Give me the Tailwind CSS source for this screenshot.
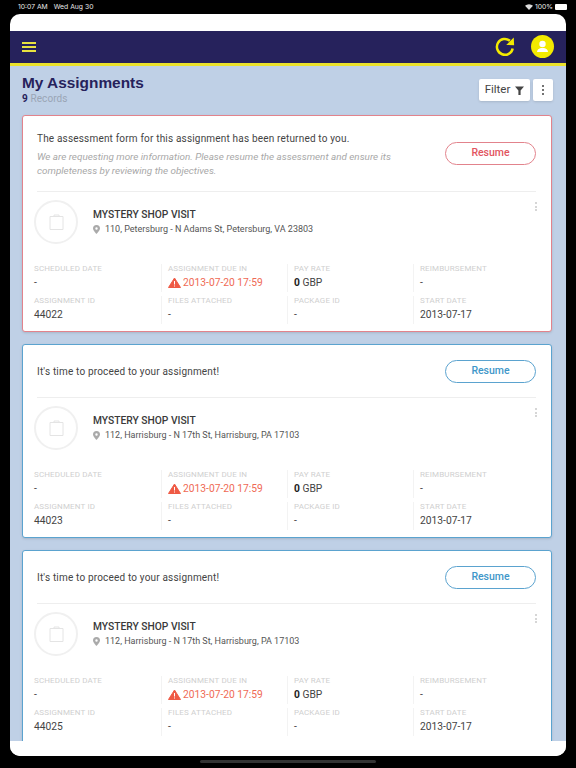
<!DOCTYPE html>
<html><head><meta charset="utf-8">
<script src="https://cdn.jsdelivr.net/npm/@tailwindcss/browser@4"></script>
</head>
<body class="bg-black font-['Roboto',sans-serif]">
<div class="w-[576px] h-[768px] bg-black flex flex-col overflow-hidden relative">
  <div class="h-[14px] flex items-center justify-between pl-[18px] pr-[9px] text-[6.800px] text-[#e8e8e8] font-['Inter',sans-serif]">
    <div class="flex gap-[6px]"><span>10:07 AM</span><span>Wed Aug 30</span></div>
    <div class="flex items-center gap-[2px]">
      <svg width="8" height="6" viewBox="0 0 16 12" fill="#ddd"><path d="M8 12 0 3.5a12 12 0 0 1 16 0z"/></svg>
      <span>100%</span>
      <span class="w-[12px] h-[6px] bg-white rounded-[1px]"></span>
    </div>
  </div>
  <div class="mx-[10px] h-[742px] bg-white rounded-[10px] overflow-hidden flex flex-col">
    <div class="h-[17px] shrink-0"></div>
    <div class="h-[35px] shrink-0 bg-[#26225c] border-b-[3px] border-[#ebe22b] flex items-center justify-between pl-[12px] pr-[12px]">
      <div class="flex flex-col gap-[2px] w-[14px]">
        <span class="h-[2px] bg-[#e8e23f]"></span><span class="h-[2px] bg-[#e8e23f]"></span><span class="h-[2px] bg-[#e8e23f]"></span>
      </div>
      <div class="flex items-center gap-[14px] -mt-[1px]">
        <svg width="23" height="24" viewBox="0 0 24 24" fill="none"><path d="M19.5 13.5A8.3 8.3 0 1 1 16.6 5.4" stroke="#f3ea00" stroke-width="2.6"/><path d="M12.8 9.8 21 10.2 20.6 2z" fill="#f3ea00"/></svg>
        <div class="w-[23px] h-[23px] rounded-full bg-[#f3ea00] flex items-center justify-center">
          <svg width="13" height="13" viewBox="0 0 13 13" fill="#fff"><circle cx="6.5" cy="4" r="3.2"/><path d="M1 12c0-2.500 2-3.500 4-4h3c2 .5 4 1.500 4 4z"/></svg>
        </div>
      </div>
    </div>
    <div class="h-[675px] shrink-0 bg-[#bfd0e6] pl-[12px] pr-[14px] overflow-hidden">
      <div class="h-[49px] flex justify-between pt-[8px] -mr-[1px]">
        <div>
          <div class="font-['Liberation_Sans',sans-serif] font-bold text-[15.400px] leading-[18px] text-[#26225c]">My Assignments</div>
          <div class="mt-[1px] text-[10px] leading-[11px] text-[#9aa5b5] tracking-[0.1px]"><b class="text-[#26225c]">9</b> Records</div>
        </div>
        <div class="flex gap-[3px] h-[22px] mt-[5px]">
          <div class="w-[51px] bg-white rounded-[2px] shadow-sm flex items-center justify-center gap-[5px] text-[11.500px] text-[#444]">Filter
            <svg width="9" height="9" viewBox="0 0 9 9" fill="#444"><path d="M0 .5h9L5.600 4.500V9H3.400V4.500z"/></svg>
          </div>
          <div class="w-[20px] bg-white rounded-[2px] shadow-sm flex flex-col items-center justify-center gap-[2px]">
            <span class="w-[2px] h-[2px] rounded-full bg-[#444]"></span><span class="w-[2px] h-[2px] rounded-full bg-[#444]"></span><span class="w-[2px] h-[2px] rounded-full bg-[#444]"></span>
          </div>
        </div>
      </div>

      <!-- Card 1 -->
      <div class="h-[217px] bg-white border border-[#e2838c] rounded-[3px] pl-[14px] pr-[15px] shadow-sm mb-[12px]">
        <div class="h-[76px] flex justify-between border-b border-[#eeeeee]">
          <div class="pt-[16px] w-[380px]">
            <div class="text-[10px] leading-[13px] text-[#444] tracking-[0.18px]">The assessment form for this assignment has been returned to you.</div>
            <div class="mt-[5px] text-[9.900px] leading-[14px] italic text-[#a8a8a8]">We are requesting more information. Please resume the assessment and ensure its completeness by reviewing the objectives.</div>
          </div>
          <div class="pt-[26px]"><div class="w-[91px] h-[23px] rounded-full border border-[#e2838c] flex items-center justify-center text-[10.500px] font-medium text-[#e2555f] pb-[1px]">Resume</div></div>
        </div>
        <div class="h-[68px] -ml-[3px] -mr-[1px] flex pt-[8px] relative">
          <div class="w-[44px] h-[44px] rounded-full border-2 border-[#f0f0f0] flex items-center justify-center">
            <svg width="15" height="16" viewBox="0 0 15 16" fill="none" stroke="#e4e4e4"><path d="M1 2.500h13v13H1z"/><path d="M5 2.500V1h5v1.500" /></svg>
          </div>
          <div class="ml-[15px] pt-[9px]">
            <div class="text-[10.250px] leading-[12px] font-medium text-[#3a3a3a]">MYSTERY SHOP VISIT</div>
            <div class="mt-[3px] flex items-center text-[9px] leading-[11px] text-[#555]">
              <svg class="mr-[5px]" width="7" height="9" viewBox="0 0 7 9" fill="#aaa"><path fill-rule="evenodd" d="M3.500 0a3.500 3.500 0 0 1 3.500 3.500C7 5.500 3.500 9 3.500 9S0 5.500 0 3.500A3.500 3.500 0 0 1 3.500 0zm0 2.300a1.200 1.200 0 1 0 0 2.400 1.200 1.200 0 0 0 0-2.400z"/></svg>
              110, Petersburg - N Adams St, Petersburg, VA 23803
            </div>
          </div>
          <div class="absolute right-0 top-[10px] flex flex-col gap-[1.500px]"><span class="w-[2px] h-[2px] rounded-full bg-[#c8c8c8]"></span><span class="w-[2px] h-[2px] rounded-full bg-[#c8c8c8]"></span><span class="w-[2px] h-[2px] rounded-full bg-[#c8c8c8]"></span></div>
        </div>
        <div class="-ml-[3px] grid grid-cols-[134px_126px_126px_1fr] gap-y-[4px] pt-[4px] text-[8px] leading-[10px] text-[#cfcfcf] tracking-[0.15px]">
          <div class="h-[28px] border-r border-[#f3f3f3] mr-[6px]">SCHEDULED DATE<div class="mt-[2px] text-[10.250px] leading-[14px] text-[#444] tracking-normal">-</div></div>
          <div class="h-[28px] border-r border-[#f3f3f3] mr-[6px]">ASSIGNMENT DUE IN<div class="mt-[2px] flex items-center gap-[2px] text-[10.250px] leading-[14px] text-[#ef6a55] tracking-normal"><svg class="-mt-[2px]" width="13" height="11" viewBox="0 0 13 11"><path fill="#ef5a45" stroke="#ef5a45" stroke-linejoin="round" d="M6.500 1 12.500 10.500H.5z"/><path stroke="#fff" d="M6.500 4v3.500M6.500 8.500v1"/></svg>2013-07-20 17:59</div></div>
          <div class="h-[28px] border-r border-[#f3f3f3] mr-[6px]">PAY RATE<div class="mt-[2px] text-[10.250px] leading-[14px] text-[#444] tracking-normal"><b class="text-[#222]">0</b> GBP</div></div>
          <div class="h-[28px]">REIMBURSEMENT<div class="mt-[2px] text-[10.250px] leading-[14px] text-[#444] tracking-normal">-</div></div>
          <div class="h-[28px] border-r border-[#f3f3f3] mr-[6px]">ASSIGNMENT ID<div class="mt-[2px] text-[10.250px] leading-[14px] text-[#444] tracking-normal">44022</div></div>
          <div class="h-[28px] border-r border-[#f3f3f3] mr-[6px]">FILES ATTACHED<div class="mt-[2px] text-[10.250px] leading-[14px] text-[#444] tracking-normal">-</div></div>
          <div class="h-[28px] border-r border-[#f3f3f3] mr-[6px]">PACKAGE ID<div class="mt-[2px] text-[10.250px] leading-[14px] text-[#444] tracking-normal">-</div></div>
          <div class="h-[28px]">START DATE<div class="mt-[2px] text-[10.250px] leading-[14px] text-[#444] tracking-normal">2013-07-17</div></div>
        </div>
      </div>

      <!-- Card 2 -->
      <div class="h-[194px] bg-white border border-[#5ba3cf] rounded-[3px] pl-[14px] pr-[15px] shadow-sm mb-[12px]">
        <div class="h-[53px] flex justify-between items-center border-b border-[#eeeeee]">
          <div class="text-[10px] leading-[13px] text-[#444] tracking-[0.18px]">It's time to proceed to your assignment!</div>
          <div class="w-[91px] h-[23px] rounded-full border border-[#5ba3cf] flex items-center justify-center text-[10.500px] font-medium text-[#3f97c9] pb-[1px]">Resume</div>
        </div>
        <div class="h-[68px] -ml-[3px] -mr-[1px] flex pt-[8px] relative">
          <div class="w-[44px] h-[44px] rounded-full border-2 border-[#f0f0f0] flex items-center justify-center">
            <svg width="15" height="16" viewBox="0 0 15 16" fill="none" stroke="#e4e4e4"><path d="M1 2.500h13v13H1z"/><path d="M5 2.500V1h5v1.500" /></svg>
          </div>
          <div class="ml-[15px] pt-[9px]">
            <div class="text-[10.250px] leading-[12px] font-medium text-[#3a3a3a]">MYSTERY SHOP VISIT</div>
            <div class="mt-[3px] flex items-center text-[9px] leading-[11px] text-[#555]">
              <svg class="mr-[5px]" width="7" height="9" viewBox="0 0 7 9" fill="#aaa"><path fill-rule="evenodd" d="M3.500 0a3.500 3.500 0 0 1 3.500 3.500C7 5.500 3.500 9 3.500 9S0 5.500 0 3.500A3.500 3.500 0 0 1 3.500 0zm0 2.300a1.200 1.200 0 1 0 0 2.400 1.200 1.200 0 0 0 0-2.400z"/></svg>
              112, Harrisburg - N 17th St, Harrisburg, PA 17103
            </div>
          </div>
          <div class="absolute right-0 top-[10px] flex flex-col gap-[1.500px]"><span class="w-[2px] h-[2px] rounded-full bg-[#c8c8c8]"></span><span class="w-[2px] h-[2px] rounded-full bg-[#c8c8c8]"></span><span class="w-[2px] h-[2px] rounded-full bg-[#c8c8c8]"></span></div>
        </div>
        <div class="-ml-[3px] grid grid-cols-[134px_126px_126px_1fr] gap-y-[4px] pt-[4px] text-[8px] leading-[10px] text-[#cfcfcf] tracking-[0.15px]">
          <div class="h-[28px] border-r border-[#f3f3f3] mr-[6px]">SCHEDULED DATE<div class="mt-[2px] text-[10.250px] leading-[14px] text-[#444] tracking-normal">-</div></div>
          <div class="h-[28px] border-r border-[#f3f3f3] mr-[6px]">ASSIGNMENT DUE IN<div class="mt-[2px] flex items-center gap-[2px] text-[10.250px] leading-[14px] text-[#ef6a55] tracking-normal"><svg class="-mt-[2px]" width="13" height="11" viewBox="0 0 13 11"><path fill="#ef5a45" stroke="#ef5a45" stroke-linejoin="round" d="M6.500 1 12.500 10.500H.5z"/><path stroke="#fff" d="M6.500 4v3.500M6.500 8.500v1"/></svg>2013-07-20 17:59</div></div>
          <div class="h-[28px] border-r border-[#f3f3f3] mr-[6px]">PAY RATE<div class="mt-[2px] text-[10.250px] leading-[14px] text-[#444] tracking-normal"><b class="text-[#222]">0</b> GBP</div></div>
          <div class="h-[28px]">REIMBURSEMENT<div class="mt-[2px] text-[10.250px] leading-[14px] text-[#444] tracking-normal">-</div></div>
          <div class="h-[28px] border-r border-[#f3f3f3] mr-[6px]">ASSIGNMENT ID<div class="mt-[2px] text-[10.250px] leading-[14px] text-[#444] tracking-normal">44023</div></div>
          <div class="h-[28px] border-r border-[#f3f3f3] mr-[6px]">FILES ATTACHED<div class="mt-[2px] text-[10.250px] leading-[14px] text-[#444] tracking-normal">-</div></div>
          <div class="h-[28px] border-r border-[#f3f3f3] mr-[6px]">PACKAGE ID<div class="mt-[2px] text-[10.250px] leading-[14px] text-[#444] tracking-normal">-</div></div>
          <div class="h-[28px]">START DATE<div class="mt-[2px] text-[10.250px] leading-[14px] text-[#444] tracking-normal">2013-07-17</div></div>
        </div>
      </div>

      <!-- Card 3 -->
      <div class="h-[194px] bg-white border border-[#5ba3cf] rounded-[3px] pl-[14px] pr-[15px] shadow-sm">
        <div class="h-[53px] flex justify-between items-center border-b border-[#eeeeee]">
          <div class="text-[10px] leading-[13px] text-[#444] tracking-[0.18px]">It's time to proceed to your assignment!</div>
          <div class="w-[91px] h-[23px] rounded-full border border-[#5ba3cf] flex items-center justify-center text-[10.500px] font-medium text-[#3f97c9] pb-[1px]">Resume</div>
        </div>
        <div class="h-[68px] -ml-[3px] -mr-[1px] flex pt-[8px] relative">
          <div class="w-[44px] h-[44px] rounded-full border-2 border-[#f0f0f0] flex items-center justify-center">
            <svg width="15" height="16" viewBox="0 0 15 16" fill="none" stroke="#e4e4e4"><path d="M1 2.500h13v13H1z"/><path d="M5 2.500V1h5v1.500" /></svg>
          </div>
          <div class="ml-[15px] pt-[9px]">
            <div class="text-[10.250px] leading-[12px] font-medium text-[#3a3a3a]">MYSTERY SHOP VISIT</div>
            <div class="mt-[3px] flex items-center text-[9px] leading-[11px] text-[#555]">
              <svg class="mr-[5px]" width="7" height="9" viewBox="0 0 7 9" fill="#aaa"><path fill-rule="evenodd" d="M3.500 0a3.500 3.500 0 0 1 3.500 3.500C7 5.500 3.500 9 3.500 9S0 5.500 0 3.500A3.500 3.500 0 0 1 3.500 0zm0 2.300a1.200 1.200 0 1 0 0 2.400 1.200 1.200 0 0 0 0-2.400z"/></svg>
              112, Harrisburg - N 17th St, Harrisburg, PA 17103
            </div>
          </div>
          <div class="absolute right-0 top-[10px] flex flex-col gap-[1.500px]"><span class="w-[2px] h-[2px] rounded-full bg-[#c8c8c8]"></span><span class="w-[2px] h-[2px] rounded-full bg-[#c8c8c8]"></span><span class="w-[2px] h-[2px] rounded-full bg-[#c8c8c8]"></span></div>
        </div>
        <div class="-ml-[3px] grid grid-cols-[134px_126px_126px_1fr] gap-y-[4px] pt-[4px] text-[8px] leading-[10px] text-[#cfcfcf] tracking-[0.15px]">
          <div class="h-[28px] border-r border-[#f3f3f3] mr-[6px]">SCHEDULED DATE<div class="mt-[2px] text-[10.250px] leading-[14px] text-[#444] tracking-normal">-</div></div>
          <div class="h-[28px] border-r border-[#f3f3f3] mr-[6px]">ASSIGNMENT DUE IN<div class="mt-[2px] flex items-center gap-[2px] text-[10.250px] leading-[14px] text-[#ef6a55] tracking-normal"><svg class="-mt-[2px]" width="13" height="11" viewBox="0 0 13 11"><path fill="#ef5a45" stroke="#ef5a45" stroke-linejoin="round" d="M6.500 1 12.500 10.500H.5z"/><path stroke="#fff" d="M6.500 4v3.500M6.500 8.500v1"/></svg>2013-07-20 17:59</div></div>
          <div class="h-[28px] border-r border-[#f3f3f3] mr-[6px]">PAY RATE<div class="mt-[2px] text-[10.250px] leading-[14px] text-[#444] tracking-normal"><b class="text-[#222]">0</b> GBP</div></div>
          <div class="h-[28px]">REIMBURSEMENT<div class="mt-[2px] text-[10.250px] leading-[14px] text-[#444] tracking-normal">-</div></div>
          <div class="h-[28px] border-r border-[#f3f3f3] mr-[6px]">ASSIGNMENT ID<div class="mt-[2px] text-[10.250px] leading-[14px] text-[#444] tracking-normal">44025</div></div>
          <div class="h-[28px] border-r border-[#f3f3f3] mr-[6px]">FILES ATTACHED<div class="mt-[2px] text-[10.250px] leading-[14px] text-[#444] tracking-normal">-</div></div>
          <div class="h-[28px] border-r border-[#f3f3f3] mr-[6px]">PACKAGE ID<div class="mt-[2px] text-[10.250px] leading-[14px] text-[#444] tracking-normal">-</div></div>
          <div class="h-[28px]">START DATE<div class="mt-[2px] text-[10.250px] leading-[14px] text-[#444] tracking-normal">2013-07-17</div></div>
        </div>
      </div>
    </div>
    <div class="flex-1 bg-white"></div>
  </div>
  <div class="flex-1 flex justify-center items-center -mt-[1px]"><span class="w-[176px] h-[3px] rounded-full bg-[#333]"></span></div>
</div>
</body></html>
